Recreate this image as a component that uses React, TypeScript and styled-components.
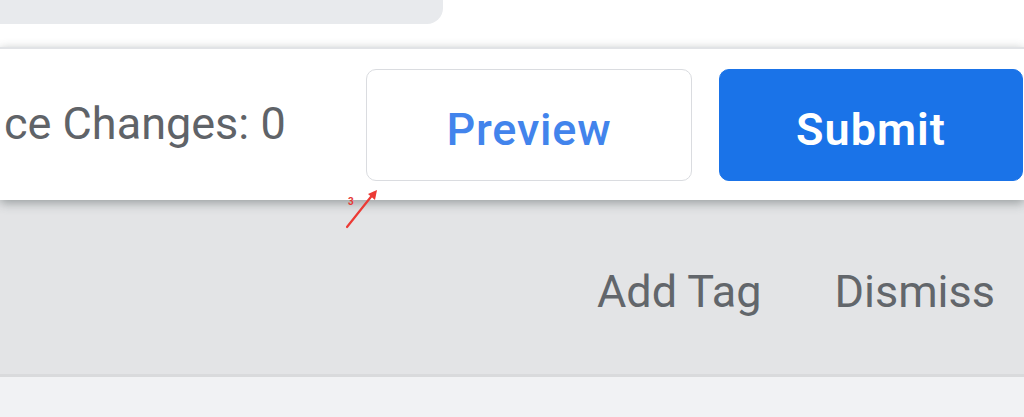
import React from "react";
import styled, { createGlobalStyle } from "styled-components";

const GlobalStyle = createGlobalStyle`
  html, body {
    margin: 0;
    padding: 0;
    background: #f1f2f4;
    overflow: hidden;
  }
  body {
    font-family: Roboto, "Liberation Sans", Arial, sans-serif;
  }
`;

const Page = styled.div`
  position: relative;
  width: 1024px;
  height: 417px;
  overflow: hidden;
  display: flex;
  flex-direction: column;
  background: #f1f2f4;
`;

const TopArea = styled.div`
  height: 47px;
  background: #ffffff;
`;

const FieldBox = styled.div`
  width: 443px;
  height: 24px;
  background: #e8eaed;
  border-bottom-right-radius: 16px;
`;

const ActionBar = styled.div`
  position: relative;
  z-index: 1;
  height: 151px;
  display: flex;
  align-items: center;
  padding: 0 1px 0 0;
  background: #ffffff;
  border-top: 2px solid #e1e3e6;
  box-shadow: 0 3px 10px rgba(60, 70, 70, 0.45);
`;

const ChangesText = styled.div`
  flex: 1;
  padding: 0 0 2px 4px;
  font-size: 45px;
  color: #5f6368;
  white-space: nowrap;
`;

const Button = styled.button<{ $primary?: boolean; $width: number }>`
  width: ${(p) => p.$width}px;
  height: 112px;
  margin-left: 27px;
  padding: 10px 0 0;
  border-radius: 10px;
  border: 1px solid ${(p) => (p.$primary ? "#1a73e8" : "#dadce0")};
  background: ${(p) => (p.$primary ? "#1a73e8" : "#ffffff")};
  color: ${(p) => (p.$primary ? "#ffffff" : "#4284ec")};
  font-family: Roboto, "Liberation Sans", Arial, sans-serif;
  font-size: 45px;
  font-weight: ${(p) => (p.$primary ? 600 : 500)};
  letter-spacing: ${(p) => (p.$primary ? "1px" : "0.8px")};
  cursor: pointer;
`;

const TagBar = styled.div`
  height: 177px;
  display: flex;
  align-items: center;
  justify-content: flex-end;
  gap: 73px;
  padding: 8px 29px 0 0;
  box-sizing: border-box;
  background: #e3e4e6;
  border-bottom: 3px solid #d9dadc;
`;

const TextButton = styled.span`
  font-size: 45px;
  color: #62666b;
  white-space: nowrap;
`;

const Annotation = styled.svg`
  position: absolute;
  left: 340px;
  top: 185px;
  z-index: 2;
`;

export default function App() {
  return (
    <>
      <GlobalStyle />
      <Page>
        <TopArea>
          <FieldBox />
        </TopArea>
        <ActionBar>
          <ChangesText>ce Changes: 0</ChangesText>
          <Button $width={326}>Preview</Button>
          <Button $primary $width={304}>
            Submit
          </Button>
        </ActionBar>
        <TagBar>
          <TextButton>Add Tag</TextButton>
          <TextButton>Dismiss</TextButton>
        </TagBar>
        <Annotation width="50" height="50" viewBox="0 0 50 50">
          <text x="8" y="20" fill="#e53935" fontSize="10" fontWeight="700" fontFamily="Roboto, sans-serif">
            3
          </text>
          <line x1="7" y1="42" x2="34" y2="8" stroke="#ec3a35" strokeWidth="2.2" strokeLinecap="round" />
          <path d="M37 5 L28 9 L35 15 Z" fill="#ec3a35" />
        </Annotation>
      </Page>
    </>
  );
}
